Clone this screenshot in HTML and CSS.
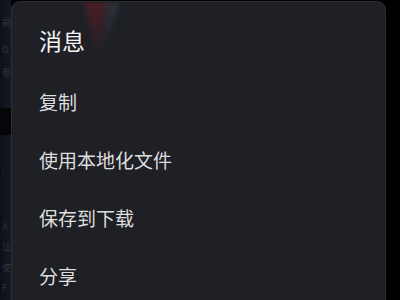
FILE: index.html
```html
<!DOCTYPE html>
<html lang="zh-CN">
<head>
<meta charset="utf-8">
<link rel="stylesheet" href="styles.css">
</head>
<body>
<div class="screen">
  <div class="behind">
    <span class="ghost g1">副</span>
    <span class="ghost g2">O</span>
    <span class="ghost g3">参</span>
    <div class="band"></div>
    <span class="ghost g4">(</span>
    <span class="ghost g5">A</span>
    <span class="ghost g6">让</span>
    <span class="ghost g7">使</span>
    <span class="ghost g8">F</span>
  </div>
  <div class="dialog">
    <svg class="shade" width="60" height="60" viewBox="0 0 60 60">
      <defs>
        <linearGradient id="rg" x1="0" y1="0" x2="0" y2="1">
          <stop offset="0" stop-color="#6e1c27" stop-opacity="0.55"/>
          <stop offset="1" stop-color="#6e1c27" stop-opacity="0"/>
        </linearGradient>
        <linearGradient id="gg" x1="0" y1="0" x2="0" y2="1">
          <stop offset="0" stop-color="#3e424b" stop-opacity="0.5"/>
          <stop offset="1" stop-color="#3e424b" stop-opacity="0"/>
        </linearGradient>
      </defs>
      <polygon points="4,0 26,0 22,55 16,52" fill="url(#rg)"/>
      <polygon points="26,0 40,0 24,52" fill="url(#gg)"/>
    </svg>
    <div class="title">消息</div>
    <ul class="menu">
      <li>复制</li>
      <li>使用本地化文件</li>
      <li>保存到下载</li>
      <li>分享</li>
    </ul>
  </div>
  <div class="edge"></div>
</div>
</body>
</html>
```

FILE: styles.css
```css
html, body {
  margin: 0;
  padding: 0;
  width: 400px;
  height: 300px;
  overflow: hidden;
  background: #000;
  font-family: "Noto Sans CJK SC", "Noto Sans", sans-serif;
}
.screen {
  display: flex;
  width: 400px;
  height: 300px;
  overflow: hidden;
}
.behind {
  position: relative;
  width: 11px;
  flex: none;
  background: linear-gradient(90deg, #0d0f17 0%, #161922 100%);
  overflow: hidden;
}
.ghost {
  position: absolute;
  left: 2px;
  font-size: 9px;
  line-height: 10px;
  color: #2e3443;
}
.g1 { top: 17px; }
.g2 { top: 45px; }
.g3 { top: 68px; }
.g4 { top: 165px; color: #262b37; }
.g5 { top: 222px; }
.g6 { top: 242px; }
.g7 { top: 263px; }
.g8 { top: 283px; }
.band {
  position: absolute;
  left: 0;
  top: 108px;
  width: 11px;
  height: 27px;
  background: #050608;
}
.dialog {
  position: relative;
  width: 375px;
  flex: none;
  margin-top: 1px;
  height: 299px;
  background: #1e2026;
  border: 1px solid #2a2d33;
  border-bottom: none;
  border-radius: 9px 9px 0 0;
  box-sizing: border-box;
  padding-left: 27px;
  overflow: hidden;
}
.shade {
  position: absolute;
  left: 68px;
  top: 0;
  filter: blur(2px);
}
.title {
  position: relative;
  padding-top: 23px;
  padding-bottom: 16.5px;
  font-size: 23px;
  line-height: 31px;
  color: #f4f4f4;
}
.menu {
  position: relative;
  list-style: none;
  margin: 0;
  padding: 0;
}
.menu li {
  height: 58px;
  line-height: 58px;
  font-size: 19px;
  color: #dedede;
  white-space: nowrap;
}
.edge {
  flex: 1;
  background: #000;
}
```
